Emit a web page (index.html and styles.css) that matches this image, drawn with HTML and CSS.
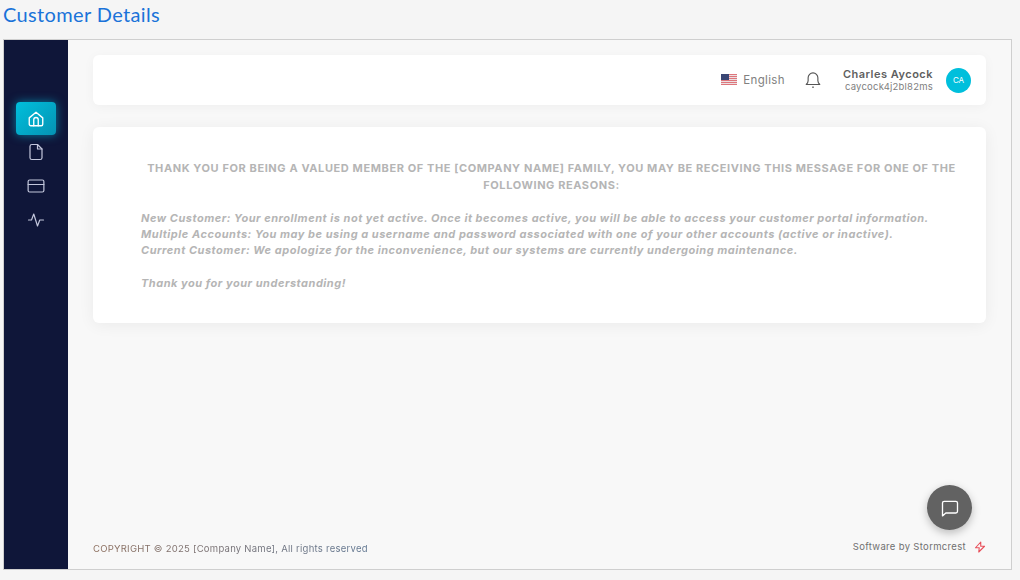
FILE: index.html
```html
<!DOCTYPE html>
<html lang="en">
<head>
<meta charset="utf-8">
<title>Customer Details</title>
<link rel="stylesheet" href="styles.css">
</head>
<body>
<h1 class="page-title">Customer Details</h1>
<div class="frame">
  <aside class="sidebar">
    <a class="nav-item active"><svg viewBox="0 0 24 24" width="18" height="18" fill="none" stroke="currentColor" stroke-width="1.800" stroke-linecap="round" stroke-linejoin="round"><path d="M3 10.500 12 3l9 7.500V19a2 2 0 0 1-2 2H5a2 2 0 0 1-2-2z"/><path d="M9 21v-8a3 3 0 0 1 6 0v8"/></svg></a>
    <a class="nav-item"><svg viewBox="0 0 24 24" width="18" height="18" fill="none" stroke="currentColor" stroke-width="1.600" stroke-linecap="round" stroke-linejoin="round"><path d="M14 2H6.500a2.500 2.500 0 0 0-2.500 2.500v15A2.500 2.500 0 0 0 6.500 22h11a2.500 2.500 0 0 0 2.500-2.500V8z"/><path d="M14 2v6h6"/></svg></a>
    <a class="nav-item"><svg viewBox="0 0 24 24" width="18" height="18" fill="none" stroke="currentColor" stroke-width="1.600" stroke-linecap="round" stroke-linejoin="round"><rect x="1.500" y="4" width="21" height="16" rx="2"/><path d="M1.500 10h21"/></svg></a>
    <a class="nav-item"><svg viewBox="0 0 24 24" width="18" height="18" fill="none" stroke="currentColor" stroke-width="1.600" stroke-linecap="round" stroke-linejoin="round"><path d="M2 12h4l3-8 5 16 3-8h5"/></svg></a>
  </aside>
  <main class="main">
    <header class="topbar">
      <div class="lang">
        <svg class="flag" viewBox="0 0 16 11" width="16" height="11"><rect width="16" height="11" fill="#ecdfe1"/><path d="M0 .5h16M0 2.500h16M0 4.500h16M0 6.500h16M0 8.500h16M0 10.500h16" stroke="#dc6a70" stroke-width=".9"/><rect width="8" height="6" fill="#3a4674"/></svg>
        <span>English</span>
      </div>
      <svg class="bell" viewBox="0 0 24 24" width="18" height="18" fill="none" stroke="#555" stroke-width="1.500" stroke-linecap="round" stroke-linejoin="round"><path d="M12 2.500a6.500 6.500 0 0 0-6.500 6.500v4c0 2.500-1.500 4-2.500 5h18c-1-1-2.500-2.500-2.500-5V9A6.500 6.500 0 0 0 12 2.500z"/><path d="M11.500 21.500h1"/></svg>
      <div class="user">
        <div class="user-name">Charles Aycock</div>
        <div class="user-id">caycock4j2bl82ms</div>
      </div>
      <div class="avatar">CA</div>
    </header>
    <section class="card">
      <h2 class="card-head">THANK YOU FOR BEING A VALUED MEMBER OF THE [COMPANY NAME] FAMILY, YOU MAY BE RECEIVING THIS MESSAGE FOR ONE OF THE FOLLOWING REASONS:</h2>
      <p class="card-text">New Customer: Your enrollment is not yet active. Once it becomes active, you will be able to access your customer portal information.<br>Multiple Accounts: You may be using a username and password associated with one of your other accounts (active or inactive).<br>Current Customer: We apologize for the inconvenience, but our systems are currently undergoing maintenance.</p>
      <p class="card-text">Thank you for your understanding!</p>
    </section>
    <footer class="footer">
      <div class="copyright">COPYRIGHT © 2025 [Company Name], All rights reserved</div>
      <div class="credit">
        <span>Software by Stormcrest</span>
        <svg viewBox="0 0 24 24" width="12" height="12" fill="none" stroke="#e8505b" stroke-width="2.200" stroke-linejoin="round"><path d="M13.500 2 3 13.500h7.500L9.500 22 21 10.500h-7.500z"/></svg>
      </div>
    </footer>
    <button class="chat" aria-label="Chat"><svg viewBox="0 0 24 24" width="20" height="20" fill="none" stroke="#fff" stroke-width="1.600" stroke-linejoin="round"><path d="M3 6a2 2 0 0 1 2-2h14a2 2 0 0 1 2 2v10a2 2 0 0 1-2 2H7l-4 3.500z"/></svg></button>
  </main>
</div>
</body>
</html>
```
FILE: styles.css
```css
* { box-sizing: border-box; }
html, body { height: 100%; }
body {
  margin: 0;
  height: 580px;
  overflow: hidden;
  background: #f5f5f5;
  font-family: "Inter", "Liberation Sans", sans-serif;
  display: flex;
  flex-direction: column;
  padding: 0 8px 10px 3px;
}
.page-title {
  margin: 0;
  height: 39px;
  padding-top: 2px;
  font-family: "Lato", sans-serif;
  font-size: 20px;
  line-height: 24px;
  font-weight: 400;
  letter-spacing: .36px;
  color: #1a73d9;
}
.frame {
  flex: 1;
  display: flex;
  border: 1px solid #cfcfcf;
  background: #f8f8f8;
  min-height: 0;
}
.sidebar {
  width: 64px;
  flex: none;
  background: #0f1639;
  display: flex;
  flex-direction: column;
  align-items: center;
  padding-top: 62px;
  gap: 1px;
}
.nav-item {
  width: 40px;
  height: 33px;
  display: flex;
  align-items: center;
  justify-content: center;
  color: #c3c7dc;
  border-radius: 4px;
}
.nav-item.active {
  color: #fff;
  background: linear-gradient(135deg, #00bfdc, #0593b3);
  box-shadow: 0 0 10px rgba(0, 190, 225, .6);
  margin-bottom: -1px;
}
.main {
  flex: 1;
  position: relative;
  padding: 15px 25px 0 25px;
  display: flex;
  flex-direction: column;
  min-width: 0;
}
.topbar {
  height: 50px;
  flex: none;
  background: #fff;
  border-radius: 6px;
  box-shadow: 0 2px 12px rgba(0, 0, 0, .04);
  display: flex;
  align-items: center;
  justify-content: flex-end;
  padding: 0 15px 0 0;
}
.lang {
  display: flex;
  align-items: center;
  gap: 6px;
  font-size: 11.500px;
  line-height: 12px;
  letter-spacing: .36px;
  color: #808080;
  margin-bottom: 1px;
}
.bell { margin: 0 21px 0 19px; }
.user { text-align: right; margin-right: 13px; }
.user-name { font-size: 11px; font-weight: 600; color: #5f5f5f; line-height: 14px; letter-spacing: .49px; }
.user-id { font-size: 9.500px; color: #808080; line-height: 12px; letter-spacing: .22px; }
.avatar {
  width: 25px;
  height: 25px;
  border-radius: 50%;
  background: #00bfdc;
  color: #fff;
  font-size: 8px;
  display: flex;
  align-items: center;
  justify-content: center;
}
.card {
  margin-top: 22px;
  height: 196px;
  flex: none;
  background: #fff;
  border-radius: 6px;
  box-shadow: 0 2px 16px rgba(0, 0, 0, .06);
  padding: 33px 24px 0 48px;
  color: #b5b5b5;
}
.card-head {
  margin: 0 0 16px;
  font-size: 11px;
  line-height: 17px;
  font-weight: 700;
  text-align: center;
  letter-spacing: .59px;
}
.card-text {
  margin: 0 0 17px;
  font-size: 11px;
  line-height: 16px;
  font-weight: 700;
  font-style: italic;
  letter-spacing: .52px;
}
.footer {
  margin-top: auto;
  height: 46px;
  flex: none;
  display: flex;
  justify-content: space-between;
  font-size: 9.500px;
  letter-spacing: .25px;
}
.copyright {
  align-self: flex-end;
  padding-bottom: 14px;
  line-height: 12px;
  background: linear-gradient(90deg, #8a6b5a, #5f7590);
  -webkit-background-clip: text;
  background-clip: text;
  color: transparent;
}
.credit {
  display: flex;
  align-items: center;
  gap: 8px;
  align-self: flex-end;
  padding-bottom: 16px;
  line-height: 12px;
  letter-spacing: .33px;
  color: #707070;
}
.chat {
  position: absolute;
  right: 39px;
  bottom: 39px;
  width: 45px;
  height: 45px;
  border: 0;
  border-radius: 50%;
  background: #626262;
  box-shadow: 0 3px 8px rgba(0, 0, 0, .25);
  display: flex;
  align-items: center;
  justify-content: center;
  padding: 0;
}
```
